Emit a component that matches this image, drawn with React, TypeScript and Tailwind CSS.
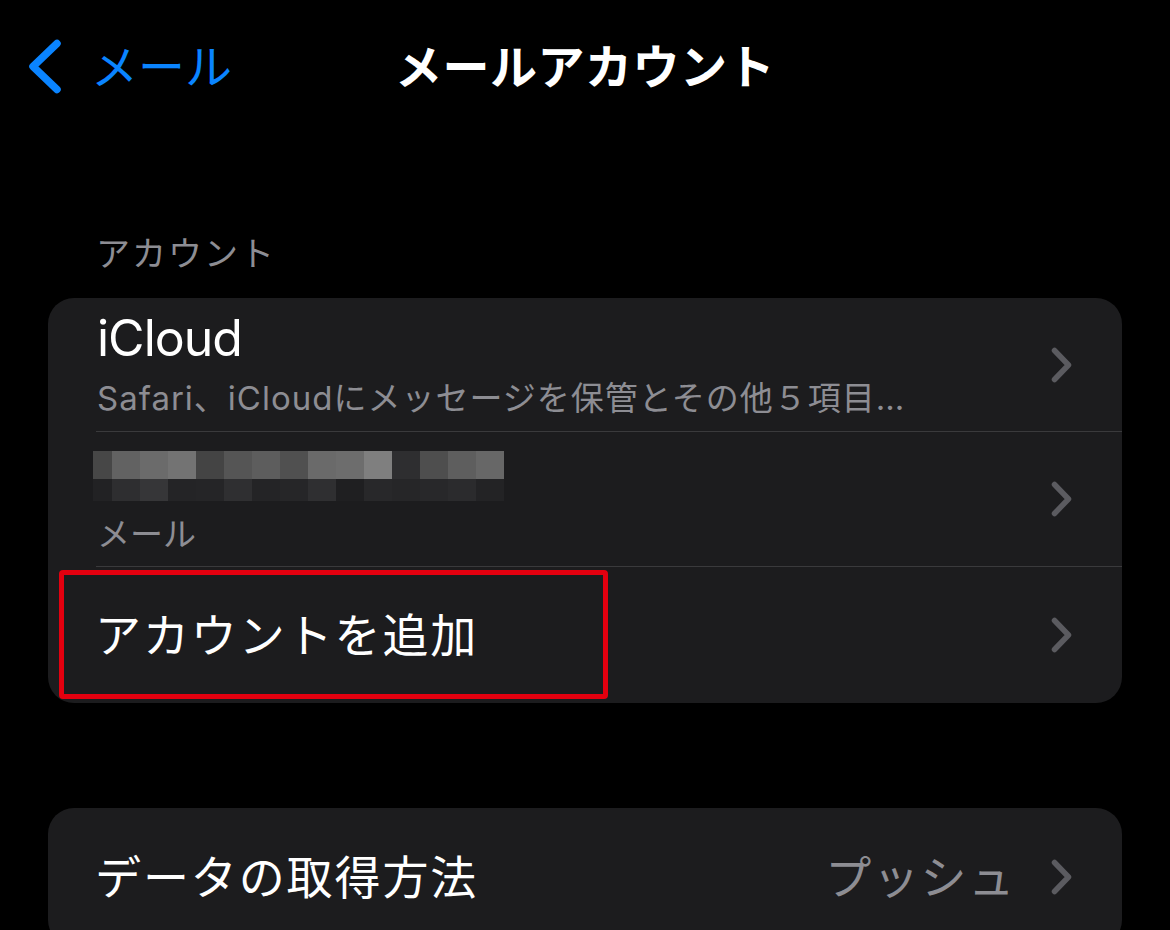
import React from "react";

const font = { fontFamily: '"Inter", "Noto Sans CJK JP", sans-serif' };

function Chevron() {
  return (
    <svg width="21" height="36" viewBox="0 0 21 36" className="shrink-0">
      <polyline
        points="3.5,3.5 17.5,18 3.5,32.5"
        fill="none"
        stroke="#5b5b60"
        strokeWidth="5.5"
        strokeLinecap="round"
        strokeLinejoin="round"
      />
    </svg>
  );
}

const topRow = ["#474747", "#626262", "#6b6b6b", "#737373", "#444444", "#555555", "#5d5d5d", "#505050", "#6a6a6a", "#6d6d6d", "#7f7f7f", "#2e2e30", "#4e4e4e", "#5e5e5e", "#676767"];
const bottomRow = ["#222224", "#2e2e30", "#363638", "#242426", "#252527", "#2f2f31", "#242426", "#262628", "#2f2f31", "#1f1f21", "#28282a", "#262628", "#28282a", "#2b2b2d", "#232325"];

// blurred-out address, drawn as the mosaic blocks seen in the screenshot
function Mosaic() {
  return (
    <div className="flex flex-col">
      {[topRow, bottomRow].map((row, r) => (
        <div key={r} className={r === 0 ? "flex h-[28px]" : "flex h-[22px]"}>
          {row.map((c, i) => (
            <div key={i} className={i === 0 ? "w-[19px] h-full" : "w-[28px] h-full"} style={{ backgroundColor: c }} />
          ))}
        </div>
      ))}
    </div>
  );
}

export default function App() {
  return (
    <div className="w-[1170px] h-[930px] overflow-hidden bg-black text-white" style={font}>
      {/* Nav bar */}
      <div className="grid grid-cols-[1fr_auto_1fr] items-center h-[132px]">
        <div className="flex items-center pl-[28px] gap-[29px] text-[#0a84ff]">
          <svg width="34" height="55" viewBox="0 0 34 55">
            <polyline
              points="29,4.5 5,27.5 29,50.5"
              fill="none"
              stroke="#0a84ff"
              strokeWidth="7.5"
              strokeLinecap="round"
              strokeLinejoin="round"
            />
          </svg>
          <span className="text-[47px] leading-none">メール</span>
        </div>
        <div className="text-[47px] font-bold leading-none tracking-[0.5px]">メールアカウント</div>
        <div />
      </div>

      {/* Section header */}
      <div className="h-[166px] flex items-end pb-[27px] pl-[96px]">
        <span className="text-[34px] leading-none text-[#8d8d93] tracking-[2px]">アカウント</span>
      </div>

      {/* Accounts card */}
      <div className="mx-[48px] rounded-[26px] bg-[#1c1c1e]">
        <div className="ml-[48px] h-[134px] flex pr-[50px] border-b border-[#3a3a3c]">
          <div className="flex-1 flex flex-col pl-[1px] pt-[13px]">
            <span className="text-[50px] leading-[54px] tracking-[-1px]">iCloud</span>
            <span className="text-[33px] leading-[44px] text-[#8d8d93] tracking-[1px] mt-[11px]">Safari、iCloudにメッセージを保管とその他５項目…</span>
          </div>
          <div className="self-center">
            <Chevron />
          </div>
        </div>
        <div className="ml-[48px] h-[135px] flex items-center pr-[50px] border-b border-[#3a3a3c]">
          <div className="flex-1 flex flex-col -ml-[3px] pt-[4px]">
            <Mosaic />
            <span className="text-[33px] leading-none text-[#8d8d93] mt-[17px] ml-[4px]">メール</span>
          </div>
          <Chevron />
        </div>
        <div className="relative h-[136px] flex items-center pl-[47px] pr-[50px]">
          <span className="flex-1 text-[46px] leading-none tracking-[1.9px]">アカウントを追加</span>
          <Chevron />
          <div className="absolute left-[11px] top-[3px] w-[549px] h-[129px] border-[5px] border-[#e3000f] rounded-[4px]" />
        </div>
      </div>

      {/* Fetch card */}
      <div className="mx-[48px] mt-[105px] rounded-[26px] bg-[#1c1c1e]">
        <div className="h-[138px] flex items-center pl-[47px] pr-[50px]">
          <span className="flex-1 text-[46px] leading-none tracking-[1.9px]">データの取得方法</span>
          <span className="text-[46px] leading-none text-[#8d8d93] mr-[35px] tracking-[1.7px]">プッシュ</span>
          <Chevron />
        </div>
      </div>
    </div>
  );
}
